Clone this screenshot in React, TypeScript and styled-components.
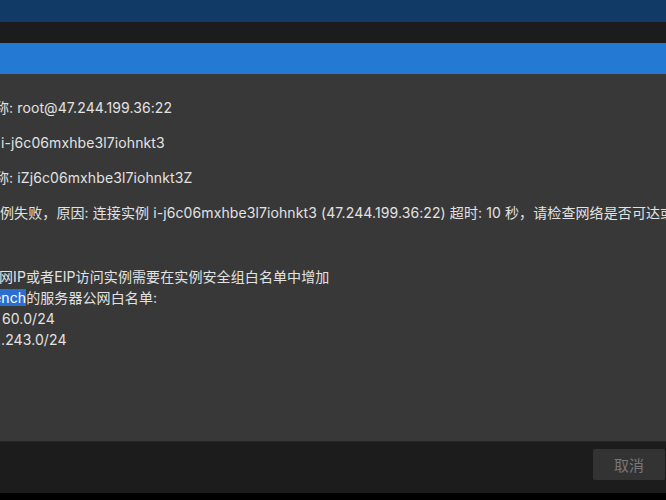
import React from "react";
import styled, { createGlobalStyle } from "styled-components";

const Global = createGlobalStyle`
  html, body { margin: 0; padding: 0; background: #000; }
  body { width: 666px; height: 500px; overflow: hidden; }
  #root { height: 500px; }
`;

const Page = styled.div`
  display: flex;
  flex-direction: column;
  width: 666px;
  height: 500px;
  overflow: hidden;
  font-family: Inter, "Noto Sans CJK SC", sans-serif;
`;

const TopBar = styled.div`
  height: 22px;
  background: #123a66;
  flex: none;
`;

const Gap = styled.div`
  height: 21px;
  background: #1c1c1c;
  flex: none;
`;

const TitleBar = styled.div`
  height: 31px;
  background: #2479d3;
  flex: none;
`;

const Body = styled.div`
  height: 367px;
  flex: none;
  background: #383838;
  color: #e2e2e2;
  font-size: 14px;
  letter-spacing: 0.1px;
  overflow: hidden;
  padding-top: 23px;
  box-sizing: border-box;
  display: flex;
  flex-direction: column;
`;

const Para = styled.div<{ $shift?: number }>`
  line-height: 21px;
  white-space: nowrap;
  margin-bottom: 14px;
  margin-left: ${(p) => p.$shift ?? 0}px;
`;

const Block = styled.div`
  margin-top: 29px;
  display: flex;
  flex-direction: column;
`;

const Line = styled.div<{ $shift?: number }>`
  line-height: 21px;
  white-space: nowrap;
  margin-left: ${(p) => p.$shift ?? 0}px;
`;

const Sel = styled.span`
  background: #2a6fd0;
  color: #fff;
`;

const Footer = styled.div`
  height: 52px;
  flex: none;
  background: #1c1c1c;
  border-top: 1px solid #262626;
  box-sizing: border-box;
  display: flex;
  justify-content: flex-end;
  align-items: flex-start;
  padding: 7px 1px 0 0;
`;

const CancelBtn = styled.button`
  width: 72px;
  height: 31px;
  background: #333333;
  border: none;
  border-radius: 2px;
  color: #777777;
  font-family: "Noto Sans CJK SC", sans-serif;
  font-size: 15px;
  padding: 0;
`;

const Bottom = styled.div`
  flex: 1;
  background: #000;
`;

export default function App() {
  return (
    <Page>
      <Global />
      <TopBar />
      <Gap />
      <TitleBar />
      <Body>
        <Para $shift={-5}>称: root@47.244.199.36:22</Para>
        <Para $shift={1}>i-j6c06mxhbe3l7iohnkt3</Para>
        <Para $shift={-5}>称: iZj6c06mxhbe3l7iohnkt3Z</Para>
        <Para $shift={0}>
          例失败，原因: 连接实例 i-j6c06mxhbe3l7iohnkt3 (47.244.199.36:22) 超时: 10 秒，请检查网络是否可达或
        </Para>
        <Block>
          <Line $shift={-1}>网IP或者EIP访问实例需要在实例安全组白名单中增加</Line>
          <Line $shift={-7}>
            <Sel>ench</Sel>的服务器公网白名单:
          </Line>
          <Line $shift={2}>60.0/24</Line>
          <Line $shift={1}>.243.0/24</Line>
        </Block>
      </Body>
      <Footer>
        <CancelBtn>取消</CancelBtn>
      </Footer>
      <Bottom />
    </Page>
  );
}
